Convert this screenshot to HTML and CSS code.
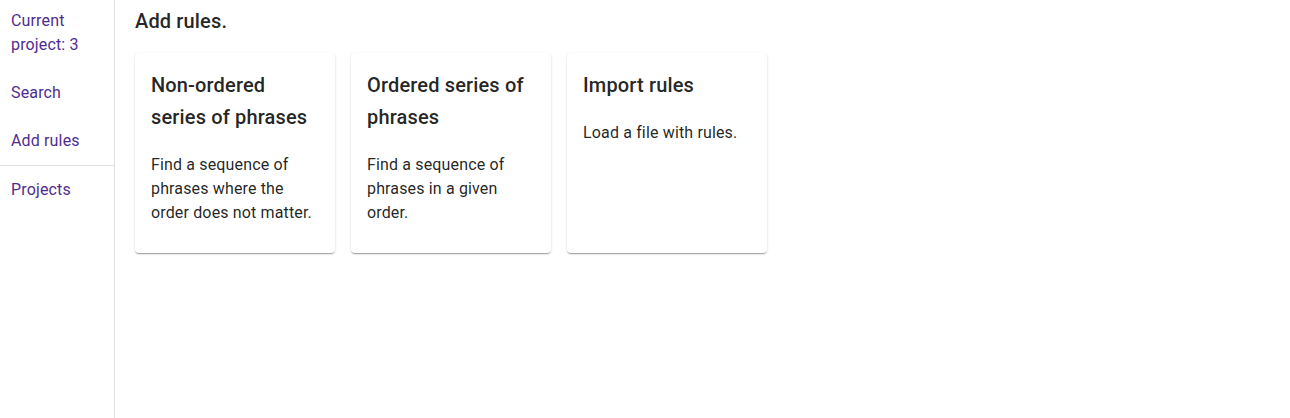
FILE: index.html
```html
<!DOCTYPE html>
<html lang="en">
<head>
<meta charset="utf-8">
<title>Add rules</title>
<link rel="stylesheet" href="styles.css">
</head>
<body>
<div class="layout">
  <nav class="sidebar">
    <a class="nav-link" href="#">Current project: 3</a>
    <a class="nav-link" href="#">Search</a>
    <a class="nav-link" href="#">Add rules</a>
    <hr class="nav-divider">
    <a class="nav-link nav-link-after" href="#">Projects</a>
  </nav>
  <main class="main">
    <h1 class="page-title">Add rules.</h1>
    <div class="cards">
      <div class="card">
        <h2 class="card-title">Non-ordered series of phrases</h2>
        <p class="card-text">Find a sequence of phrases where the order does not matter.</p>
      </div>
      <div class="card">
        <h2 class="card-title">Ordered series of phrases</h2>
        <p class="card-text">Find a sequence of phrases in a given order.</p>
      </div>
      <div class="card">
        <h2 class="card-title">Import rules</h2>
        <p class="card-text">Load a file with rules.</p>
      </div>
    </div>
  </main>
</div>
</body>
</html>
```

FILE: styles.css
```css
html, body {
  margin: 0;
  padding: 0;
  height: 100%;
  background: #ffffff;
  font-family: Roboto, "Liberation Sans", Arial, sans-serif;
  color: rgba(0, 0, 0, 0.87);
}

.layout {
  display: flex;
  height: 100%;
}

.sidebar {
  width: 114px;
  flex: 0 0 114px;
  border-right: 1px solid #e0e0e0;
  display: flex;
  flex-direction: column;
  padding-top: 1px;
  box-sizing: content-box;
}

.nav-link {
  display: block;
  padding: 8px 11px;
  font-size: 16px;
  line-height: 24px;
  letter-spacing: 0.15px;
  color: #4f2d91;
  text-decoration: none;
}

.nav-link + .nav-link {
  margin-top: 8px;
}

.nav-divider {
  border: 0;
  border-top: 1px solid #e0e0e0;
  margin: 4px 0 4px;
  height: 0;
}

.main {
  flex: 1;
  padding: 5px 20px 0;
}

.page-title {
  margin: 0 0 16px;
  font-size: 20px;
  line-height: 32px;
  font-weight: 500;
  letter-spacing: 0.15px;
}

.cards {
  display: flex;
  gap: 16px;
  align-items: flex-start;
}

.card {
  width: 200px;
  height: 200px;
  box-sizing: border-box;
  padding: 16px;
  border-radius: 4px;
  background: #fff;
  box-shadow: 0 2px 1px -1px rgba(0,0,0,.2), 0 1px 1px 0 rgba(0,0,0,.14), 0 1px 3px 0 rgba(0,0,0,.12);
}

.card-title {
  margin: 0 0 20px;
  font-size: 20px;
  line-height: 32px;
  font-weight: 500;
  letter-spacing: 0.15px;
}

.card-text {
  margin: 0;
  font-size: 16px;
  line-height: 24px;
  letter-spacing: 0.15px;
}
```
